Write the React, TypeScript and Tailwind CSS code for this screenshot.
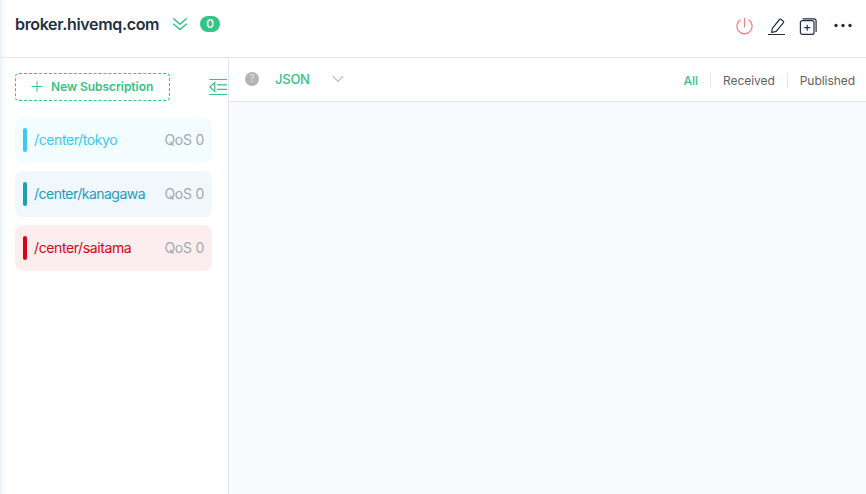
import React from "react";

type Topic = { name: string; text: string; bar: string; bg: string; tracking: string };

const topics: Topic[] = [
  { name: "/center/tokyo", text: "text-[#3cc8f5]", bar: "bg-[#3cc8f5]", bg: "bg-[#f3fcff]", tracking: "tracking-[-0.4px]" },
  { name: "/center/kanagawa", text: "text-[#1e9dbf]", bar: "bg-[#1e9dbf]", bg: "bg-[#f0f8fb]", tracking: "tracking-[-0.52px]" },
  { name: "/center/saitama", text: "text-[#d90411]", bar: "bg-[#d90411]", bg: "bg-[#fceeef]", tracking: "tracking-[-0.4px]" },
];

function Header() {
  return (
    <header className="flex h-[58px] shrink-0 justify-between border-b border-[#e5e5ef] pl-[15px] pr-[13px]">
      <div className="flex h-12 items-center">
        <h1 className="w-[157px] whitespace-nowrap text-[16px] font-semibold tracking-[-0.34px] text-[#242f42]">broker.hivemq.com</h1>
        <svg className="h-4 w-4" viewBox="0 0 16 16" fill="none" stroke="#34c388" strokeWidth="1.5">
          <path d="M1.3 2.5 8 8.3l6.7-5.8M1.3 7.7 8 13.5l6.7-5.8" />
        </svg>
        <span className="ml-3 flex h-4 w-5 items-center justify-center rounded-full bg-[#34c388] text-[12px] font-medium text-white">0</span>
      </div>
      <div className="flex h-[54px] items-center">
        <svg className="h-[18px] w-[18px]" viewBox="0 0 18 18" fill="none" stroke="#f47c7c" strokeWidth="1.2">
          <path d="M9.5 0v9.5M5.6 1.7a7.6 7.6 0 1 0 7.8 0" />
        </svg>
        <svg className="ml-[14px] h-[18px] w-[18px]" viewBox="0 0 18 18" fill="none" stroke="#242f42" strokeWidth="1.2" strokeLinejoin="round">
          <path d="M1 16.5h17M4.7 14.5l.6-4.2 7.2-8.8q.6-.8 1.4-.2l2.4 1.9q.8.6.2 1.4L9.2 13.3z" />
        </svg>
        <svg className="ml-[14px] h-[18px] w-[18px]" viewBox="0 0 18 18" fill="none" stroke="#242f42" strokeWidth="1.2">
          <rect x="1.4" y="2.6" width="13.6" height="13.8" rx="2" />
          <path d="M3.5.9h11.4q2.2 0 2.2 2.2V14M8.2 6.7v6M5.2 9.7h6" />
        </svg>
        <svg className="ml-[16px] h-[18px] w-5" viewBox="0 0 20 18" fill="#242f42">
          <circle cx="3" cy="7.5" r="1.7" />
          <circle cx="10" cy="7.5" r="1.7" />
          <circle cx="17" cy="7.5" r="1.7" />
        </svg>
      </div>
    </header>
  );
}

function Sidebar() {
  return (
    <aside className="flex w-[229px] shrink-0 flex-col border-r border-[#e5e5ef] pl-[15px] pr-px pt-[15px]">
      <div className="flex h-7 items-center justify-between">
        <button className="flex h-7 w-[155px] items-center whitespace-nowrap rounded border border-dashed border-[#34c388] pl-[15px] text-[12px] font-semibold tracking-[-0.04px] text-[#34c388]">
          <svg className="mr-[8px] h-3 w-3" viewBox="0 0 12 12" fill="none" stroke="#34c388">
            <path d="M.5 5.5h11M6 .3v10.4" />
          </svg>
          New Subscription
        </button>
        <svg className="h-[18px] w-[18px]" viewBox="0 0 18 18" fill="none" stroke="#34c388" strokeWidth="1.2">
          <path d="M.3 1.5H18M8 6.8h10M8 11.3h10M.3 16.5H18M5.8 4.6v8.8L.9 9z" />
        </svg>
      </div>
      <ul className="mt-4 flex flex-col gap-2">
        {topics.map((t) => (
          <li key={t.name} className={`flex h-[46px] w-[197px] items-center rounded-lg px-2 text-[14px] ${t.bg}`}>
            <span className={`h-6 w-1 rounded-[2px] ${t.bar}`} />
            <span className={`mb-0.5 ml-[7px] ${t.text} ${t.tracking}`}>{t.name}</span>
            <span className="mb-0.5 ml-auto whitespace-nowrap tracking-[-0.25px] text-[#a2a9b0]">QoS 0</span>
          </li>
        ))}
      </ul>
    </aside>
  );
}

function Toolbar() {
  return (
    <div className="flex h-11 shrink-0 items-center border-b border-[#e5e5ef] bg-white pl-4 pr-[11px]">
      <span className="flex h-[14px] w-[14px] -translate-y-px items-center justify-center rounded-full bg-[#b4b4b4] text-[10px] text-[#e4e4e4]">?</span>
      <span className="ml-4 w-[57px] text-[13px] font-medium tracking-[-0.25px] text-[#34c388]">JSON</span>
      <svg className="h-3 w-3 -translate-y-px" viewBox="0 0 12 12" fill="none" stroke="#b6bac5" strokeWidth="1.2">
        <path d="m.8 3.2 5.2 5.2 5.2-5.2" />
      </svg>
      <nav className="ml-auto flex items-center pt-0.5 text-[12px] text-[#606266]">
        <span className="pr-3 font-medium text-[#34c388]">All</span>
        <span className="h-[15px] w-px bg-[#e5e5ef]" />
        <span className="px-3 tracking-[-0.05px]">Received</span>
        <span className="h-[15px] w-px bg-[#e5e5ef]" />
        <span className="pl-3 tracking-[-0.05px]">Published</span>
      </nav>
    </div>
  );
}

export default function App() {
  return (
    <div className="flex h-[494px] w-[866px] flex-col overflow-hidden bg-white bg-[linear-gradient(to_right,#eef1f4_0px,#fafbfc_4px,#ffffff_8px)] font-['Inter','Liberation_Sans',sans-serif]">
      <Header />
      <div className="flex min-h-0 flex-1">
        <Sidebar />
        <main className="flex min-w-0 flex-1 flex-col bg-[#f9fafd]">
          <Toolbar />
        </main>
      </div>
    </div>
  );
}
